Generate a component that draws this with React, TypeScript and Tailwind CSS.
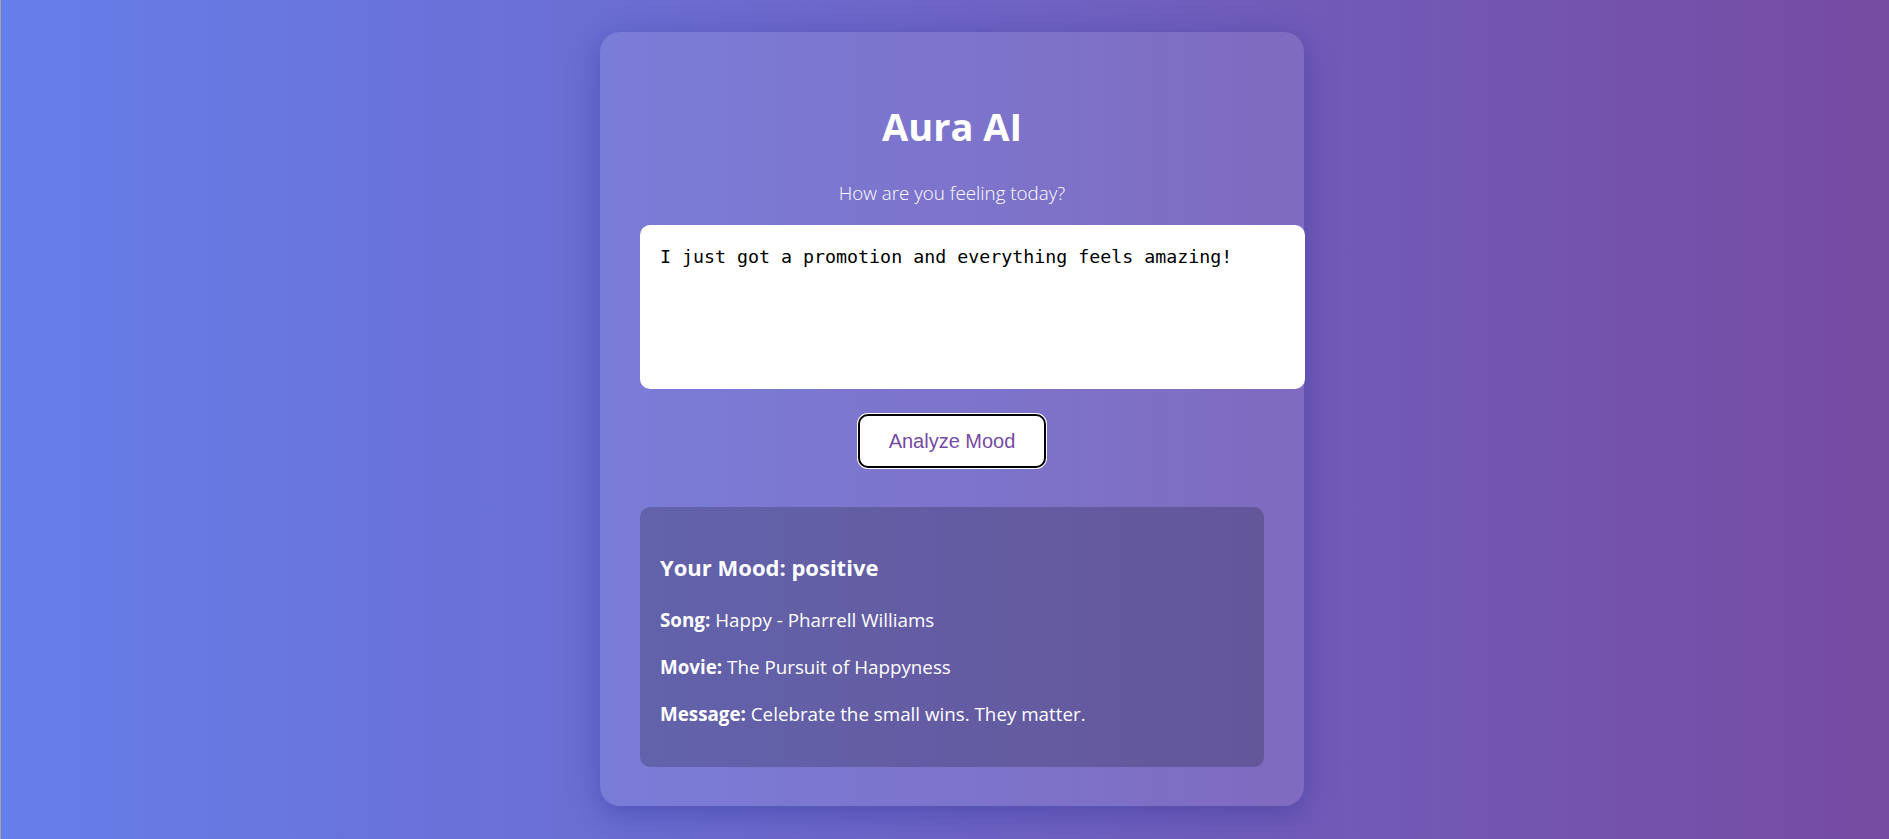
import { useState } from 'react'

const result = {
  mood: 'positive',
  song: 'Happy - Pharrell Williams',
  movie: 'The Pursuit of Happyness',
  message: 'Celebrate the small wins. They matter.',
}

export default function App() {
  const [text, setText] = useState(
    'I just got a promotion and everything feels amazing!'
  )

  return (
    <div className="min-h-screen w-full bg-[linear-gradient(90deg,#667eea_0%,#764ba2_100%)] border-l border-[#a3a3a3] font-['Open_Sans',sans-serif] text-white">
      <div className="flex justify-center pl-[14px] pt-[32px] pb-[32px]">
        <div className="w-[704px] rounded-[20px] bg-white/10 shadow-[0_8px_32px_0_rgba(31,38,135,0.37)] px-10 pt-[70px] pb-[39px] flex flex-col items-center">
          <h1 className="text-[38px] leading-[48px] font-bold">Aura AI</h1>
          <p className="mt-[30px] text-[18.8px] leading-[26px] font-light">
            How are you feeling today?
          </p>

          <textarea
            value={text}
            onChange={(e) => setText(e.target.value)}
            className="self-start mt-[19px] w-[665px] h-[164px] resize-none rounded-[10px] bg-white border-0 outline-none pl-[20px] pr-4 pt-[21px] font-['DejaVu_Sans_Mono',monospace] text-[18.3px] leading-[22px] text-black"
          />

          <button className="mt-[25px] w-[188px] h-[54px] rounded-[10px] bg-white border-2 border-black ring-1 ring-white font-['Liberation_Sans',Arial,sans-serif] text-[20px] text-[#764ba2]">
            Analyze Mood
          </button>

          <div className="mt-[39px] w-full rounded-[10px] bg-black/20 px-5 pt-[46px] pb-[39px] flex flex-col">
            <h3 className="text-[22px] leading-[28px] font-bold">
              Your Mood: {result.mood}
            </h3>
            <p className="mt-[25px] text-[18.8px] leading-[28px]">
              <strong>Song:</strong> {result.song}
            </p>
            <p className="mt-[19px] text-[18.8px] leading-[28px]">
              <strong>Movie:</strong> {result.movie}
            </p>
            <p className="mt-[19px] text-[18.8px] leading-[28px]">
              <strong>Message:</strong> {result.message}
            </p>
          </div>
        </div>
      </div>
    </div>
  )
}
